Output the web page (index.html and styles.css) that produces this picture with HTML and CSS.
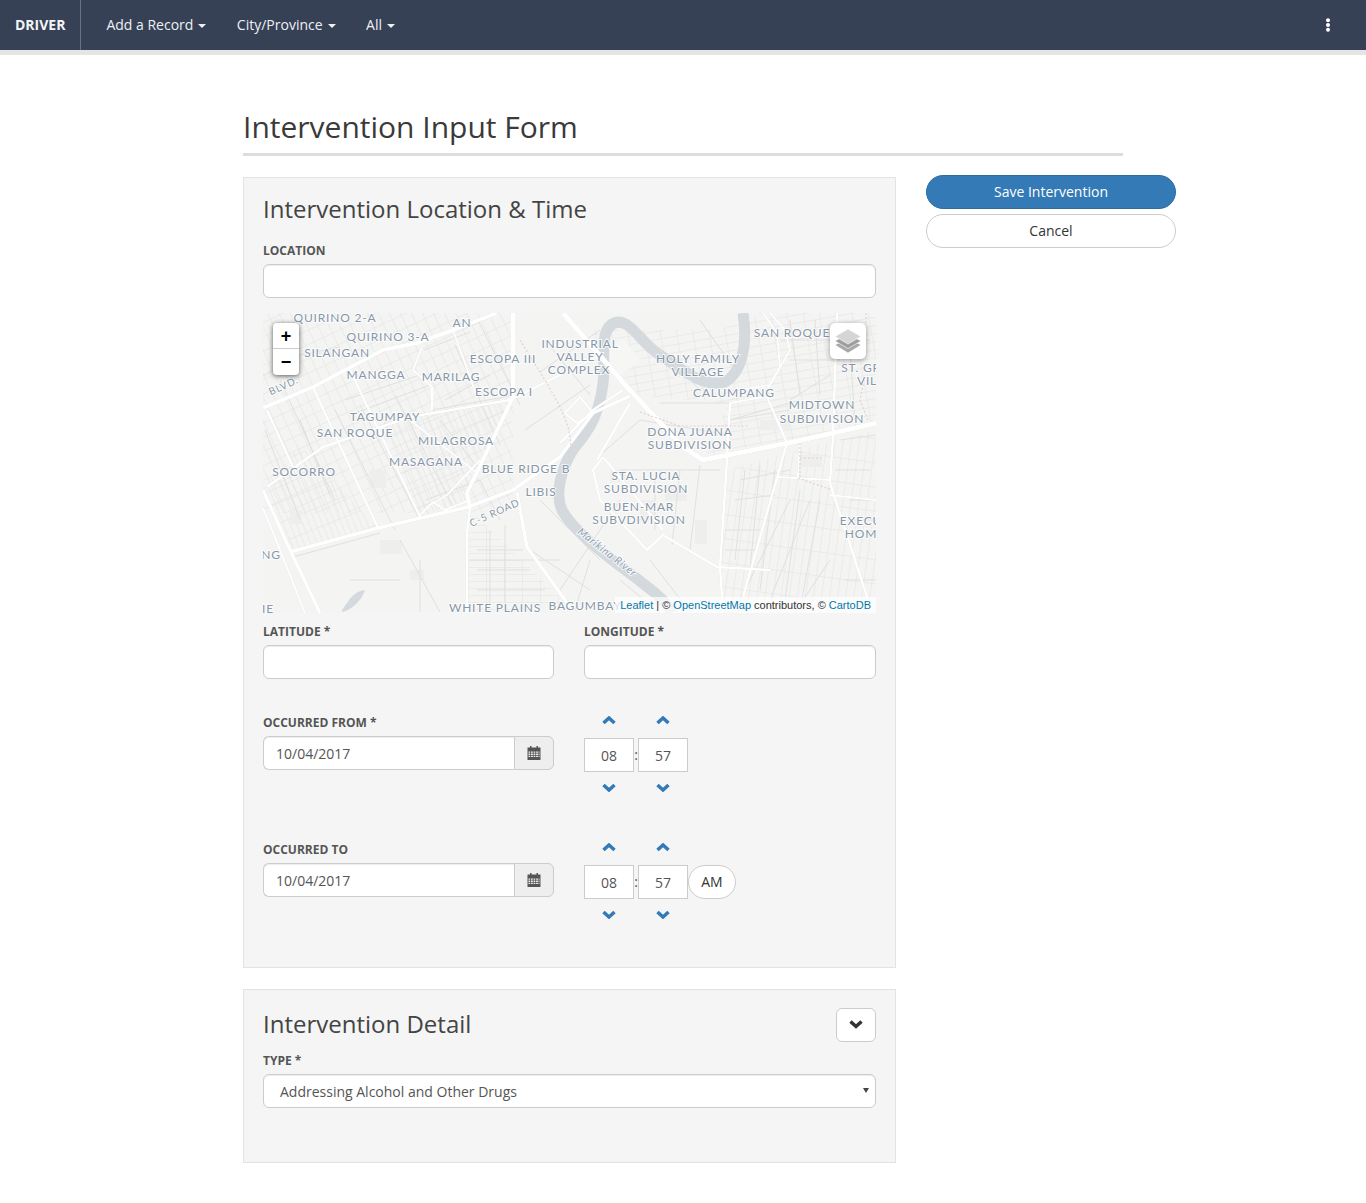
FILE: index.html
```html
<!DOCTYPE html>
<html lang="en">
<head>
<meta charset="utf-8">
<title>Intervention Input Form</title>
<link rel="stylesheet" href="styles.css">
</head>
<body>
<header class="navbar">
  <a class="brand">DRIVER</a>
  <nav class="nav">
    <a class="nav-item">Add a Record <i class="caret"></i></a>
    <a class="nav-item">City/Province <i class="caret"></i></a>
    <a class="nav-item">All <i class="caret"></i></a>
  </nav>
  <svg class="kebab" width="6" height="14" viewBox="0 0 6 14"><circle cx="3" cy="2.2" r="2"/><circle cx="3" cy="7" r="2"/><circle cx="3" cy="11.8" r="2"/></svg>
</header>

<div class="page">
  <h1 class="page-title">Intervention Input Form</h1>
  <div class="columns">
    <main class="forms">
      <section class="panel panel-location">
        <h2 class="panel-title">Intervention Location &amp; Time</h2>
        <label class="field-label">LOCATION</label>
        <input class="text-input" type="text">

        <div class="map">
          <svg class="map-svg" width="613" height="300" viewBox="263 313 613 300">
            <defs>
              <pattern id="p1" width="10" height="13" patternUnits="userSpaceOnUse" patternTransform="rotate(-25)"><path class="hatch" d="M0 0H10M0 0V13"/></pattern>
              <pattern id="p2" width="6" height="19" patternUnits="userSpaceOnUse" patternTransform="rotate(-22)"><path class="hatch" d="M0 0H6M0 0V19"/></pattern>
              <pattern id="p3" width="8" height="24" patternUnits="userSpaceOnUse" patternTransform="rotate(8)"><path class="hatch" d="M0 0H8M0 0V24"/></pattern>
              <pattern id="p4" width="16" height="8" patternUnits="userSpaceOnUse" patternTransform="rotate(-10)"><path class="hatch" d="M0 0H16M0 0V8"/></pattern>
              <pattern id="p5" width="18" height="7" patternUnits="userSpaceOnUse"><path class="hatch" d="M0 0H18M0 0V7"/></pattern>
              <g id="minor">
                <path d="M263 376L300 355L340 347M300 420L330 495M335 410L395 530M360 405L420 520M395 395L455 510M424 350L470 332M445 400L490 375M455 345L500 445M478 320L520 405M432 410L510 396M440 420L480 470M425 500L480 480M480 480L500 520M545 340L590 395M540 372L600 330M525 430L590 385M540 500L600 560M530 550L590 590M620 500L560 590M650 560L690 612M730 403L660 403M730 420L800 400M640 420L730 435M780 340L870 340M790 360L840 360M830 375L790 400M740 480L790 470M735 500L775 495M725 530L760 530M725 550L755 550M790 500L740 600M810 500L770 600M830 560L795 612M870 470L835 470M845 580L876 580M620 470L720 470M470 560L560 560M400 540L440 612M350 580L400 580M420 560L420 612"/>
                <path d="M293 557L380 533M477 550H523M477 570H530M477 590H545M490 530V613M505 525V613M640 420L600 455M655 480V530M680 470L672 545M700 465L690 550M745 470L735 560M760 465L750 570M775 470L760 590M800 490L785 600M820 500L800 610M850 500L876 500M850 520L876 520M840 440L876 435M850 350L855 420M620 580L660 613M590 560L575 610M650 340L700 390M700 320L735 370M790 320L800 395M815 320L820 395M730 420L790 410M345 400L420 375M350 415L430 385M280 380L335 500M265 430L300 520"/>
              </g>
              <g id="major">
                <path class="w5" d="M263 408L313 387L383 350L417 343L453 330L497 313"/>
                <path class="w5" d="M513 313L513 397L467 493L470 508"/>
                <path class="w4" d="M290 552L378 528L468 507L513 490L560 457L593 413L630 396"/>
                <path class="w3" d="M560 443L593 410L623 390"/>
                <path class="w6" d="M563 313L627 387L683 447L703 460L793 442L877 423"/>
                <path class="w4" d="M517 493L527 547L570 607"/>
                <path class="w4" d="M263 490L290 550L320 613"/>
                <path class="w2" d="M263 508L280 550L305 613"/>
                <path class="w3" d="M470 508L467 533L467 613"/>
                <path class="w3" d="M267 410L293 467M313 387L378 528M350 370L420 517"/>
                <path class="w3" d="M267 487L323 447L410 417L510 400L550 380L600 355"/>
                <path class="w2" d="M410 420L477 473M413 370L432 387L432 410M422 347L413 370M453 330L477 397"/>
                <path class="w2" d="M430 505L447 495L480 460M420 515L433 502L445 510L470 500"/>
                <path class="w2" d="M565 413L580 397L593 413L577 423Z"/>
                <path class="w3" d="M727 460L720 567L723 613M730 403L727 460"/>
                <path class="w2" d="M730 403L763 397L780 367L777 333L763 313M740 390L770 385L790 350L785 330L770 313"/>
                <path class="w3" d="M767 397L787 443L743 597L740 613M833 437L830 483L867 597L872 613M837 313L833 437"/>
                <path class="w2" d="M777 477L830 480M800 443L798 477M830 495L877 500"/>
                <path class="w3" d="M603 457L593 470L600 500L647 550L663 535L717 567L770 570"/>
                <path class="w3" d="M630 403L597 460M603 457L663 530"/>
              </g>
            </defs>
            <rect class="map-bg" x="263" y="313" width="613" height="300"/>
            <rect x="263" y="313" width="250" height="200" fill="url(#p1)"/>
            <polygon points="300,445 378,528 290,552 263,490" fill="url(#p2)"/>
            <polygon points="378,420 510,400 467,500 420,517" fill="url(#p2)"/>
            <polygon points="470,510 570,607 467,613" fill="url(#p5)"/>
            <polygon points="730,400 877,340 877,423 703,460" fill="url(#p4)"/>
            <polygon points="725,470 877,430 877,613 720,613" fill="url(#p3)"/>
            <polygon points="590,330 720,330 760,313 877,313 877,340 730,403 630,395" fill="url(#p4)"/>
            <polygon points="600,350 625,340 640,360 615,380" class="park"/>
            <g class="buildings">
              <rect x="640" y="500" width="14" height="20"/><rect x="665" y="485" width="22" height="16"/>
              <rect x="695" y="520" width="12" height="24"/><rect x="610" y="470" width="16" height="12"/>
              <rect x="380" y="540" width="22" height="14"/><rect x="410" y="570" width="14" height="10"/>
              <rect x="370" y="470" width="16" height="18"/><rect x="290" y="510" width="12" height="14"/>
              <rect x="760" y="420" width="30" height="10"/><rect x="800" y="455" width="22" height="12"/>
            </g>
            <path class="river" d="M743 313C748 345 742 372 725 382C705 388 685 372 660 355C640 342 632 322 618 322C600 325 604 350 604 372C602 410 590 430 574 448C560 470 555 495 562 510C575 535 620 565 645 585C660 596 668 605 672 613"/>
            <use href="#minor" class="road-minor"/>
            <use href="#major" class="road-case"/>
            <use href="#major" class="road-fill"/>
            <path class="boundary" d="M866 313V325M864 380L860 400L868 420M800 443V477M800 458H822M798 478L832 490M640 412L680 426L748 426M520 340C550 390 590 440 560 470"/>
            <path class="pond" d="M342 610C350 600 352 592 365 590C362 600 352 610 342 612Z"/>
            <g class="map-labels">
              <text x="335" y="322">QUIRINO 2-A</text>
              <text x="388" y="341">QUIRINO 3-A</text>
              <text x="337" y="357">SILANGAN</text>
              <text x="462" y="327">AN</text>
              <text x="376" y="379">MANGGA</text>
              <text x="451" y="381">MARILAG</text>
              <text x="503" y="363">ESCOPA III</text>
              <text x="504" y="396">ESCOPA I</text>
              <text x="580" y="348">INDUSTRIAL</text>
              <text x="580" y="361">VALLEY</text>
              <text x="579" y="374">COMPLEX</text>
              <text x="698" y="363">HOLY FAMILY</text>
              <text x="698" y="376">VILLAGE</text>
              <text x="792" y="337">SAN ROQUE</text>
              <text x="861" y="372">ST. GR</text>
              <text x="867" y="385">VIL</text>
              <text x="734" y="397">CALUMPANG</text>
              <text x="822" y="409">MIDTOWN</text>
              <text x="822" y="423">SUBDIVISION</text>
              <text x="690" y="436">DONA JUANA</text>
              <text x="690" y="449">SUBDIVISION</text>
              <text x="646" y="480">STA. LUCIA</text>
              <text x="646" y="493">SUBDIVISION</text>
              <text x="639" y="511">BUEN-MAR</text>
              <text x="639" y="524">SUBVDIVISION</text>
              <text x="385" y="421">TAGUMPAY</text>
              <text x="355" y="437">SAN ROQUE</text>
              <text x="456" y="445">MILAGROSA</text>
              <text x="426" y="466">MASAGANA</text>
              <text x="526" y="473">BLUE RIDGE B</text>
              <text x="541" y="496">LIBIS</text>
              <text x="304" y="476">SOCORRO</text>
              <text x="495" y="612">WHITE PLAINS</text>
              <text x="585" y="610">BAGUMBAY</text>
              <text x="861" y="525">EXECU</text>
              <text x="861" y="538">HOM</text>
              <text x="271" y="559">NG</text>
              <text x="268" y="613">IE</text>
              <text class="rot" transform="translate(496 516) rotate(-24)">C-5 ROAD</text>
              <text class="rot" transform="translate(285 389) rotate(-25)">BLVD.</text>
              <text class="river-label" transform="translate(605 555) rotate(38)">Marikina River</text>
            </g>
          </svg>
          <div class="zoom-control"><a class="zoom-btn">+</a><a class="zoom-btn">&#8722;</a></div>
          <div class="layers-control">
            <svg width="28" height="26" viewBox="0 0 28 26">
              <path class="layer l3" d="M14 10L27 17L14 25L1 17Z"/>
              <path class="layer l2" d="M14 6L27 13L14 20.500L1 13Z"/>
              <path class="layer l1" d="M14 1L27 8.500L14 16L1 8.500Z"/>
            </svg>
          </div>
          <div class="attribution"><a>Leaflet</a> | © <a>OpenStreetMap</a> contributors, © <a>CartoDB</a></div>
        </div>

        <div class="two-col coords">
          <div><label class="field-label">LATITUDE *</label><input class="text-input" type="text"></div>
          <div><label class="field-label">LONGITUDE *</label><input class="text-input" type="text"></div>
        </div>

        <div class="two-col datetime first">
          <div class="date-col">
            <label class="field-label">OCCURRED FROM *</label>
            <div class="date-group">
              <input class="date-input" type="text" value="10/04/2017">
              <span class="addon"><svg class="cal" width="14" height="14" viewBox="0 0 14 14"><use href="#cal-icon"/></svg></span>
            </div>
          </div>
          <div class="time-picker">
            <svg class="chev" width="14" height="9" viewBox="0 0 14 9"><path d="M1.500 7L7 2L12.500 7"/></svg><span></span>
            <svg class="chev" width="14" height="9" viewBox="0 0 14 9"><path d="M1.500 7L7 2L12.500 7"/></svg><span></span>
            <input class="time-input" type="text" value="08"><span class="colon">:</span><input class="time-input" type="text" value="57"><span></span>
            <svg class="chev" width="14" height="9" viewBox="0 0 14 9"><path d="M1.500 2L7 7L12.500 2"/></svg><span></span>
            <svg class="chev" width="14" height="9" viewBox="0 0 14 9"><path d="M1.500 2L7 7L12.500 2"/></svg><span></span>
          </div>
        </div>

        <div class="two-col datetime">
          <div class="date-col">
            <label class="field-label">OCCURRED TO</label>
            <div class="date-group">
              <input class="date-input" type="text" value="10/04/2017">
              <span class="addon"><svg class="cal" width="14" height="14" viewBox="0 0 14 14"><use href="#cal-icon"/></svg></span>
            </div>
          </div>
          <div class="time-picker">
            <svg class="chev" width="14" height="9" viewBox="0 0 14 9"><path d="M1.500 7L7 2L12.500 7"/></svg><span></span>
            <svg class="chev" width="14" height="9" viewBox="0 0 14 9"><path d="M1.500 7L7 2L12.500 7"/></svg><span></span>
            <input class="time-input" type="text" value="08"><span class="colon">:</span><input class="time-input" type="text" value="57"><button class="ampm" type="button">AM</button>
            <svg class="chev" width="14" height="9" viewBox="0 0 14 9"><path d="M1.500 2L7 7L12.500 2"/></svg><span></span>
            <svg class="chev" width="14" height="9" viewBox="0 0 14 9"><path d="M1.500 2L7 7L12.500 2"/></svg><span></span>
          </div>
        </div>
      </section>

      <section class="panel panel-detail">
        <div class="panel-head">
          <h2 class="panel-title">Intervention Detail</h2>
          <button class="collapse" type="button"><svg width="14" height="9" viewBox="0 0 14 9"><path d="M1.500 1.500L7 6.500L12.500 1.500"/></svg></button>
        </div>
        <label class="field-label">TYPE *</label>
        <div class="select-box">Addressing Alcohol and Other Drugs<i class="select-arrow"></i></div>
      </section>
    </main>
    <aside class="actions">
      <button class="btn btn-primary" type="button">Save Intervention</button>
      <button class="btn btn-default" type="button">Cancel</button>
    </aside>
  </div>
</div>

<svg class="sprite" width="0" height="0">
  <defs>
    <g id="cal-icon">
      <path fill="#555" fill-rule="evenodd" d="M3 0H4.500V1.500H9.500V0H11V1.500H13.500V14H.5V1.500H3ZM1.500 5.500V6.800H3.200V5.500ZM4 5.500V6.800H5.800V5.500ZM6.600 5.500V6.800H8.300V5.500ZM9.100 5.500V6.800H10.900V5.500ZM11.600 5.500V6.800H12.500V5.500ZM1.500 7.600V8.900H3.200V7.600ZM4 7.600V8.900H5.800V7.600ZM6.600 7.600V8.900H8.300V7.600ZM9.100 7.600V8.900H10.900V7.600ZM11.600 7.600V8.900H12.500V7.600ZM1.500 9.700V11H3.200V9.700ZM4 9.700V11H5.800V9.700ZM6.600 9.700V11H8.300V9.700ZM9.100 9.700V11H10.900V9.700ZM11.600 9.700V11H12.500V9.700Z"/>
    </g>
  </defs>
</svg>
</body>
</html>
```

FILE: styles.css
```css
* { box-sizing: border-box; }
html, body { margin: 0; padding: 0; }
body {
  font-family: "Open Sans", "Liberation Sans", sans-serif;
  font-size: 14px;
  line-height: 20px;
  color: #333;
  background: #fff;
}
input, button { font-family: inherit; }

.navbar {
  display: flex;
  align-items: center;
  height: 55px;
  background: #364156;
  border-bottom: 5px solid #e5e5e3;
  color: #eef0f3;
}
.brand {
  display: flex;
  align-items: center;
  height: 50px;
  width: 81px;
  padding-left: 15px;
  border-right: 1px solid #66718a;
  font-weight: 700;
  color: #f3f4f6;
}
.nav { display: flex; gap: 30.500px; padding-left: 25.400px; }
.nav-item { display: flex; align-items: center; gap: 5px; }
.caret {
  display: inline-block;
  width: 0; height: 0;
  margin-top: 1px;
  border-top: 4px solid #eef0f3;
  border-left: 4px solid transparent;
  border-right: 4px solid transparent;
}
.kebab { margin-left: auto; margin-right: 35px; fill: #fff; }

.page { padding: 0 0 40px 243px; }
.page-title {
  width: 880px;
  margin: 0;
  padding: 52px 0 6px;
  border-bottom: 3px solid #ddd;
  font-size: 30px;
  line-height: 40px;
  font-weight: 400;
  color: #3a3a3a;
}
.columns { display: flex; align-items: flex-start; gap: 30px; }
.forms { width: 653px; padding-top: 21px; }
.actions { width: 250px; padding-top: 19px; display: flex; flex-direction: column; gap: 5px; }

.panel {
  background: #f5f5f5;
  border: 1px solid #e3e3e3;
  padding: 0 19px;
}
.panel-location { height: 791px; padding-top: 14px; }
.panel-detail { height: 174px; margin-top: 21px; padding-top: 18px; }
.panel-title {
  margin: 0;
  font-size: 24px;
  line-height: 33px;
  font-weight: 400;
  color: #444;
}
.panel-head { display: flex; justify-content: space-between; align-items: center; height: 34px; margin-bottom: 11px; }
.panel-head .panel-title { margin-top: -4px; }
.field-label {
  display: block;
  height: 15px;
  margin-bottom: 6px;
  font-size: 12px;
  line-height: 15px;
  font-weight: 700;
  color: #555;
}
.panel-location > .panel-title { margin-bottom: 18px; }
.text-input {
  display: block;
  width: 100%;
  height: 34px;
  background: #fff;
  border: 1px solid #ccc;
  border-radius: 6px;
  box-shadow: inset 0 1px 1px rgba(0,0,0,.075);
}
.map { position: relative; width: 613px; height: 300px; margin-top: 15px; overflow: hidden; }
.map-svg { display: block; }
.map-bg { fill: #f4f4f3; }
.park { fill: #f6f6f5; }
.buildings { fill: #eeeeed; }
.hatch { fill: none; stroke: #e2e2e1; stroke-width: 1; }
.river { fill: none; stroke: #d4d9dd; stroke-width: 11; }
.road-minor { fill: none; stroke: #e0e0df; stroke-width: 1; }
.road-case, .road-fill { fill: none; stroke-linejoin: round; }
.road-case { stroke: #d6d6d5; }
.road-fill { stroke: #fff; }
.w2 { stroke-width: 2; }
.w3 { stroke-width: 2.500; }
.w4 { stroke-width: 3.500; }
.w5 { stroke-width: 4; }
.w6 { stroke-width: 5; }
.road-case .w2 { stroke-width: 3; }
.road-case .w3 { stroke-width: 3.500; }
.road-case .w4 { stroke-width: 4.500; }
.road-case .w5 { stroke-width: 5; }
.road-case .w6 { stroke-width: 6; }
.boundary { fill: none; stroke: #e8cfcf; stroke-width: 1.200; stroke-dasharray: 2 2; }
.pond { fill: #d4d9dd; }
.map-labels text {
  font-family: "Lato", "Open Sans", sans-serif;
  font-size: 12px;
  letter-spacing: .8px;
  fill: #8797a8;
  stroke: #fff;
  stroke-width: 2px;
  stroke-opacity: .75;
  paint-order: stroke;
  text-anchor: middle;
}
.map-labels .rot { font-size: 10px; }
.map-labels .river-label {
  font-size: 10.500px;
  font-style: italic;
  letter-spacing: .6px;
  fill: #8fa3b3;
}
.zoom-control {
  position: absolute;
  left: 10px; top: 10px;
  width: 26px;
  background: #fff;
  border-radius: 4px;
  box-shadow: 0 1px 5px rgba(0,0,0,.65);
}
.zoom-btn {
  display: block;
  height: 26px;
  text-align: center;
  font: bold 18px/26px "Liberation Sans", sans-serif;
  color: #000;
}
.zoom-btn:first-child { border-bottom: 1px solid #ccc; }
.layers-control {
  position: absolute;
  left: 567px; top: 10px;
  width: 36px; height: 36px;
  padding: 5px 4px;
  background: #fff;
  border-radius: 5px;
  box-shadow: 0 1px 5px rgba(0,0,0,.4);
}
.layers-control svg { display: block; }
.layer { stroke: #fff; stroke-width: .6; }
.l1 { fill: #d5d5d5; }
.l2 { fill: #9e9e9e; }
.l3 { fill: #a8a8a8; }
.attribution {
  position: absolute;
  right: 0; bottom: 0;
  padding: 0 5px;
  background: rgba(255,255,255,.7);
  font: 11px/16px "Liberation Sans", sans-serif;
  color: #333;
}
.attribution a { color: #0078a8; }

.two-col { display: grid; grid-template-columns: 291px 292px; column-gap: 30px; }
.coords { margin-top: 11px; }
.datetime { margin-top: 36px; height: 91px; }
.datetime.first { margin-top: 35px; }
.datetime .date-col { padding-top: 1px; }
.date-group { display: flex; height: 34px; }
.date-input {
  flex: 1;
  min-width: 0;
  height: 34px;
  padding: 0 12px;
  font-size: 14px;
  color: #555;
  background: #fff;
  border: 1px solid #ccc;
  border-right: 0;
  border-radius: 6px 0 0 6px;
  box-shadow: inset 0 1px 1px rgba(0,0,0,.075);
}
.addon {
  display: flex;
  align-items: center;
  justify-content: center;
  width: 40px;
  background: #eee;
  border: 1px solid #ccc;
  border-radius: 0 6px 6px 0;
}
.cal { display: block; }
.time-picker {
  display: grid;
  grid-template-columns: 50px 4px 50px 48px;
  grid-template-rows: 22px 34px 16px;
  row-gap: 7px;
  justify-items: center;
  align-items: center;
  margin-top: -5px;
  width: 152px;
}
.chev { fill: none; stroke: #337ab7; stroke-width: 3.500; }
.time-input {
  width: 50px;
  height: 34px;
  padding: 0;
  text-align: center;
  font-size: 14px;
  color: #555;
  background: #fff;
  border: 1px solid #ccc;
  border-radius: 0;
}
.colon { font-size: 14px; color: #555; line-height: 34px; }
.ampm {
  width: 48px;
  height: 34px;
  padding: 0 0 2px;
  font-size: 14px;
  color: #333;
  background: #fff;
  border: 1px solid #ccc;
  border-radius: 17px;
}
.collapse {
  display: flex;
  align-items: center;
  justify-content: center;
  width: 40px;
  height: 34px;
  padding: 0 0 2px;
  background: #fff;
  border: 1px solid #ccc;
  border-radius: 6px;
}
.collapse svg { fill: none; stroke: #333; stroke-width: 3.500; }
.select-box {
  position: relative;
  height: 34px;
  padding: 0 16px;
  line-height: 34px;
  color: #555;
  background: #fff;
  border: 1px solid #ccc;
  border-radius: 6px;
  box-shadow: inset 0 1px 1px rgba(0,0,0,.075);
}
.select-arrow {
  position: absolute;
  right: 6px; top: 13px;
  width: 0; height: 0;
  border-top: 5px solid #444;
  border-left: 3px solid transparent;
  border-right: 3px solid transparent;
}
.btn {
  display: block;
  width: 100%;
  height: 34px;
  padding: 0 0 2px;
  font-size: 14px;
  border-radius: 17px;
  border: 1px solid transparent;
}
.btn-primary { background: #337ab7; border-color: #2e6da4; color: #fff; }
.btn-default { background: #fff; border-color: #ccc; color: #333; }
.sprite { position: absolute; }
```
